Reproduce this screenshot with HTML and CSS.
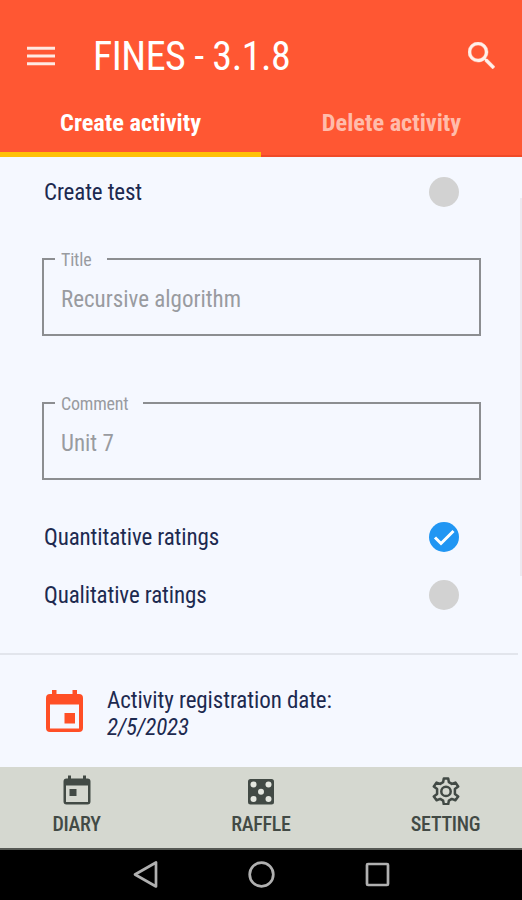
FILE: index.html
```html
<!DOCTYPE html>
<html lang="en">
<head>
<meta charset="utf-8">
<title>FINES</title>
<link rel="stylesheet" href="styles.css">
</head>
<body>
<div class="app">
  <header class="header">
    <div class="toolbar">
      <svg class="menu-icon" viewBox="0 0 28 20"><path d="M0 2.2h28M0 10h28M0 17.8h28"/></svg>
      <h1 class="title"><span class="t">FINES - 3.1.8</span></h1>
      <svg class="search-icon" viewBox="3 3 17.5 17.5"><path d="M15.5 14h-.79l-.28-.27A6.471 6.471 0 0 0 16 9.500 6.500 6.500 0 1 0 9.500 16c1.610 0 3.090-.59 4.230-1.570l.27.28v.79l5 4.990L20.490 19l-4.990-5zm-6 0C7.010 14 5 11.990 5 9.500S7.010 5 9.500 5 14 7.010 14 9.500 11.990 14 9.500 14z"/></svg>
    </div>
    <nav class="tabs">
      <a class="tab active"><span class="t">Create activity</span></a>
      <a class="tab"><span class="t">Delete activity</span></a>
    </nav>
  </header>
  <main class="content">
    <div class="row row-test"><span class="t">Create test</span><i class="radio"></i></div>
    <fieldset class="field"><legend class="legend-title"><span class="t">Title</span></legend><span class="t value">Recursive algorithm</span></fieldset>
    <fieldset class="field"><legend class="legend-comment"><span class="t">Comment</span></legend><span class="t value">Unit 7</span></fieldset>
    <div class="row row-quant"><span class="t">Quantitative ratings</span><i class="radio checked"><svg viewBox="0 0 30 30"><path d="M6 15.500l6 6L24.500 9"/></svg></i></div>
    <div class="row row-qual"><span class="t">Qualitative ratings</span><i class="radio"></i></div>
    <div class="divider"></div>
    <div class="date">
      <svg class="date-icon" viewBox="0 0 37 42"><path fill-rule="evenodd" d="M6 4V0h4.500v4h16V0H31v4h2a4 4 0 0 1 4 4v30a4 4 0 0 1-4 4H4a4 4 0 0 1-4-4V8a4 4 0 0 1 4-4zM4 14.500v24h29V14.500zM18.500 23h10.500v10.500H18.500z"/></svg>
      <div class="date-text"><span class="t">Activity registration date:</span><em class="t">2/5/2023</em></div>
    </div>
    <div class="scrollbar"></div>
  </main>
  <nav class="bottom">
    <a class="item">
      <svg class="ico" viewBox="0 0 30 30"><path fill-rule="evenodd" d="M6 3.500V.5h3v3h12V.5h3v3h1.500a3 3 0 0 1 3 3v20a3 3 0 0 1-3 3h-21a3 3 0 0 1-3-3v-20a3 3 0 0 1 3-3zM4 10.500v16.500h22v-16.500zM7.500 14h7v7h-7z"/></svg>
      <span class="t">DIARY</span>
    </a>
    <a class="item">
      <svg class="ico" viewBox="0 0 30 30"><rect x="2" y="4" width="26" height="25.500" rx="2.500"/><g class="pips"><circle cx="7.500" cy="9.500" r="3"/><circle cx="22.500" cy="9.500" r="3"/><circle cx="15" cy="16.700" r="3"/><circle cx="7.500" cy="24" r="3"/><circle cx="22.500" cy="24" r="3"/></g></svg>
      <span class="t">RAFFLE</span>
    </a>
    <a class="item">
      <svg class="ico gear" viewBox="0 0 30 30"><g transform="translate(0 .5)"><path d="M12.800 3h4.400l.7 3.700 2.900 1.700 3.600-1.300 2.800 3.800-3.300 2.500v5l3.300 2.500-2.800 3.800-3.600-1.300-2.900 1.700-.7 3.700h-4.400l-.7-3.700-2.900-1.700-3.600 1.300-2.800-3.800 3.300-2.500v-5l-3.300-2.500 2.800-3.800 3.600 1.300 2.900-1.700z"/><circle cx="15" cy="15.900" r="4.700"/></g></svg>
      <span class="t">SETTING</span>
    </a>
  </nav>
  <footer class="system">
    <svg viewBox="0 0 26 28"><path d="M24 1.500v24L3 13.500z"/></svg>
    <svg viewBox="0 0 26 28"><circle cx="13.500" cy="13.500" r="11.800"/></svg>
    <svg viewBox="0 0 26 28"><rect x="3" y="3" width="21" height="21" rx="1"/></svg>
  </footer>
</div>
</body>
</html>
```
FILE: styles.css
```css
* { box-sizing: border-box; }
body { margin: 0; font-family: "Roboto Condensed", Roboto, sans-serif; font-stretch: 75%; color: #1d2a50; }
.app { width: 522px; height: 900px; display: flex; flex-direction: column; background: #f5f8ff; overflow: hidden; }
.t { display: block; white-space: nowrap; }

.header { height: 157px; background: #ff5733; color: #fff; }
.toolbar { height: 90px; padding: 22px 27px 0; display: flex; align-items: center; }
.menu-icon { width: 28px; height: 20px; stroke: #ffe9e2; stroke-width: 3; }
.title { margin: 2px auto 0 38px; font-size: 40px; line-height: 48px; font-weight: 400; letter-spacing: -0.45px; }
.search-icon { width: 27px; height: 27px; margin-bottom: 2px; fill: #fff0ea; stroke: #fff0ea; stroke-width: 0.3; }
.tabs { display: flex; height: 67px; }
.tab { flex: 1; display: flex; justify-content: center; padding-top: 19px; font-size: 24.300px; line-height: 28px; font-weight: 700; color: #ffbcab; border-bottom: 2px solid #f04a28; }
.tab.active { color: #fff; border-bottom: 5px solid #ffc107; }

.content { position: relative; height: 610px; }
.row { display: flex; justify-content: space-between; align-items: center; height: 30px; margin: 0 63px 0 44px; font-size: 23px; letter-spacing: -0.120px; line-height: 30px; }
.row .t { padding-top: 2px; }
.row-test { margin-top: 20px; }
.radio { width: 30px; height: 30px; border-radius: 50%; background: #d2d2d2; }
.radio.checked { background: #2196f3; }
.radio svg { display: block; fill: none; stroke: #fff; stroke-width: 3; }
.field { width: 439px; height: 88px; margin: 41px 0 0 42px; padding: 0 0 0 17px; border: 2px solid #8c8e91; color: #999ba0; font-size: 23px; line-height: 28px; }
.field + .field { margin-top: 56px; }
.field legend { margin-left: -6px; padding: 1px 0 0 6px; height: 22px; font-size: 18px; letter-spacing: -0.200px; line-height: 22px; }
.legend-title { width: 52px; }
.legend-comment { width: 88px; }
.value { margin-top: 16px; }
.row-quant { margin-top: 42px; }
.row-qual { margin-top: 28px; }
.divider { height: 2px; margin: 43px 4px 0 0; background: #e2e5ec; }
.date { display: flex; margin: 31px 0 0 46px; }
.date-icon { width: 37px; height: 42px; margin-top: 4px; fill: #ff4f26; }
.date-text { margin: 1px 0 0 24px; font-size: 23px; letter-spacing: -0.090px; line-height: 27px; }
.scrollbar { position: absolute; right: 0; top: 41px; width: 2px; height: 378px; background: #ece9f0; }

.bottom { height: 83px; background: #d5d8d0; border-bottom: 2px solid #565954; display: flex; justify-content: space-between; padding: 8px 32px 0; color: #424a45; font-size: 20px; letter-spacing: -0.300px; line-height: 24px; font-weight: 550; }
.item { width: 89px; display: flex; flex-direction: column; align-items: center; }
.ico { width: 30px; height: 30px; margin-bottom: 7px; fill: #424a45; }
.ico .pips { fill: #e4e7e0; }
.ico.gear { fill: none; stroke: #424a45; stroke-width: 2.500; stroke-linejoin: round; }
.system { height: 50px; background: #000; display: flex; justify-content: center; align-items: center; gap: 90px; }
.system svg { width: 26px; height: 28px; overflow: visible; fill: none; stroke: #b0b0b0; stroke-width: 2.700; stroke-linejoin: round; }
```
